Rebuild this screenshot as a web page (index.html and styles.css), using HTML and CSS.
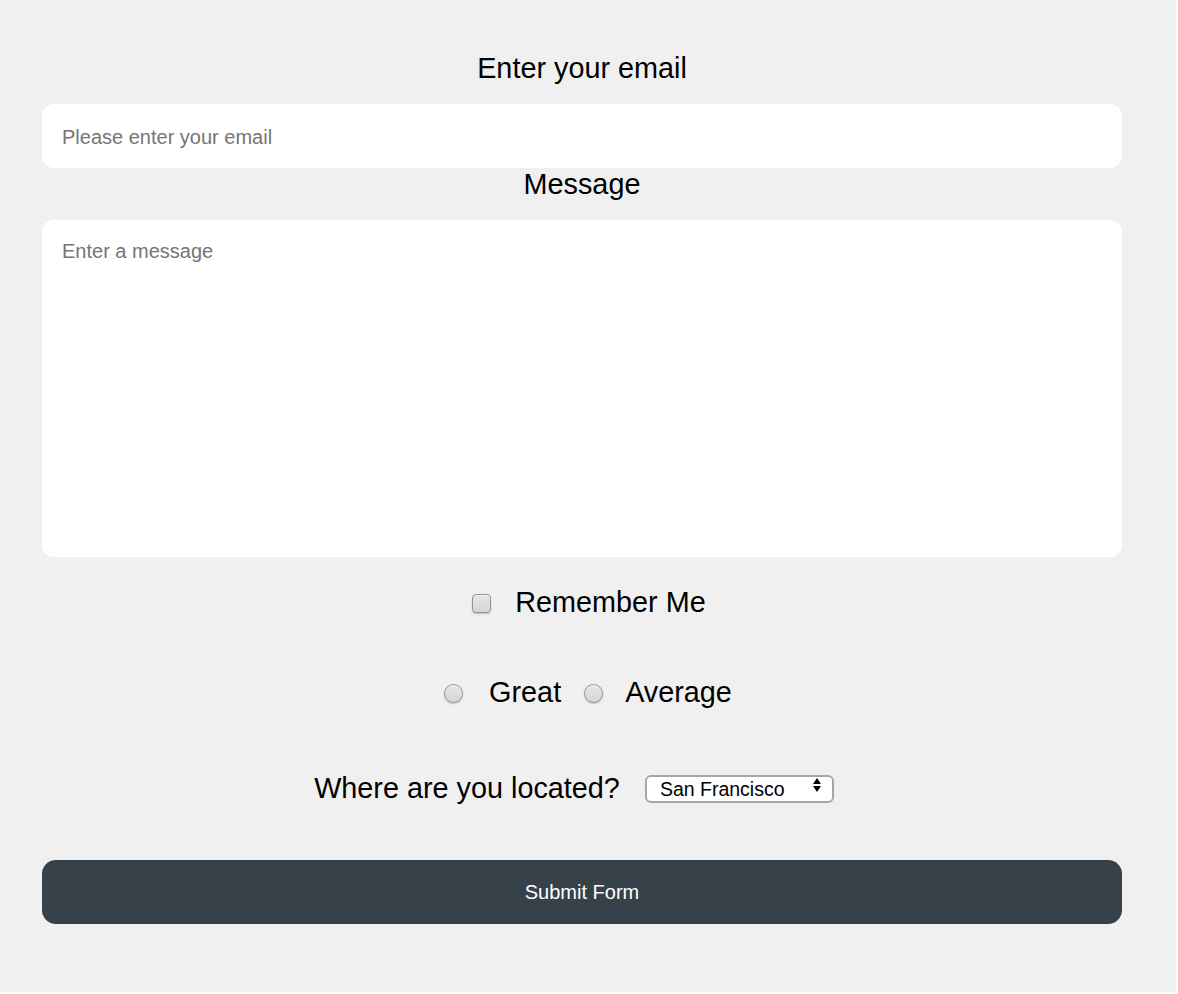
FILE: index.html
```html
<!DOCTYPE html>
<html lang="en">
<head>
<meta charset="utf-8">
<title>Contact Form</title>
<link rel="stylesheet" href="styles.css">
</head>
<body>
<div class="page">
  <form class="form">
    <label class="field-label" for="email">Enter your email</label>
    <input class="text-input" id="email" type="email" placeholder="Please enter your email">
    <label class="field-label" for="msg">Message</label>
    <textarea class="text-area" id="msg" placeholder="Enter a message"></textarea>

    <div class="row row-check">
      <input class="check" type="checkbox" id="remember">
      <label class="row-label" for="remember">Remember Me</label>
    </div>

    <div class="row row-radio">
      <input class="radio radio-first" type="radio" name="rating" id="great">
      <label class="row-label label-great" for="great">Great</label>
      <input class="radio radio-second" type="radio" name="rating" id="average">
      <label class="row-label" for="average">Average</label>
    </div>

    <div class="row row-select">
      <label class="row-label" for="loc">Where are you located?</label>
      <span class="select-wrap">
        <select class="select" id="loc">
          <option>San Francisco</option>
          <option>New York</option>
        </select>
        <svg class="select-arrows" width="8" height="14" viewBox="0 0 8 14"><path d="M4 0 L8 6 L0 6 Z" fill="#000"/><path d="M4 14 L8 8 L0 8 Z" fill="#000"/></svg>
      </span>
    </div>

    <button class="submit" type="button">Submit Form</button>
  </form>
</div>
</body>
</html>
```
FILE: styles.css
```css
html, body {
  margin: 0;
  padding: 0;
  background: #ffffff;
}

.page {
  width: 1176px;
  height: 992px;
  box-sizing: border-box;
  background: #f0f0f0;
  padding: 52px 54px 0 42px;
  font-family: "Liberation Sans", Arial, Helvetica, sans-serif;
  color: #000;
}

.form {
  display: flex;
  flex-direction: column;
  width: 1080px;
}

.field-label {
  display: block;
  text-align: center;
  font-size: 28.8px;
  line-height: 32px;
  margin-bottom: 20px;
}

.text-input,
.text-area {
  box-sizing: border-box;
  width: 1080px;
  border: none;
  border-radius: 12px;
  background: #ffffff;
  font-family: "Liberation Sans", Arial, Helvetica, sans-serif;
  font-size: 20px;
  color: #000;
  padding: 0 20px;
  outline: none;
  margin: 0;
}

.text-input {
  height: 64px;
  padding-top: 2px;
}

.text-area {
  height: 337px;
  padding-top: 19px;
  line-height: 24px;
  resize: none;
  display: block;
}

.text-input::placeholder,
.text-area::placeholder {
  color: #757575;
}

.row {
  display: flex;
  align-items: center;
  justify-content: center;
  height: 32px;
  box-sizing: border-box;
}

.row-label {
  font-size: 28.8px;
  line-height: 32px;
}

.check,
.radio {
  -webkit-appearance: none;
  appearance: none;
  margin: 0;
  width: 19px;
  height: 19px;
  box-sizing: border-box;
  border: 1px solid #929292;
  background: linear-gradient(#e6e6e6, #d6d6d6);
  box-shadow: inset 0 1px 1px rgba(255,255,255,0.7), 0 1px 1.5px rgba(0,0,0,0.22);
  flex: none;
}

.check {
  border-radius: 4px;
  transform: translateY(1px);
}

.radio {
  border-radius: 50%;
  transform: translateY(1px);
}

.row-check {
  margin-top: 29px;
  gap: 24px;
  padding-left: 14px;
}

.row-radio {
  margin-top: 58px;
  padding-left: 12px;
}

.row-radio .radio-first {
  margin-right: 26px;
}

.row-radio .label-great {
  margin-right: 23px;
}

.row-radio .radio-second {
  margin-right: 22px;
}

.row-select {
  margin-top: 64px;
  gap: 25px;
  padding-right: 16px;
}

.select-wrap {
  position: relative;
  display: inline-block;
  width: 189px;
  height: 28px;
  transform: translateY(1px);
}

.select {
  -webkit-appearance: none;
  appearance: none;
  box-sizing: border-box;
  width: 189px;
  height: 28px;
  margin: 0;
  border: 2px solid #a6a6a6;
  border-radius: 6px;
  background: #ffffff;
  font-family: "Liberation Sans", Arial, Helvetica, sans-serif;
  font-size: 19.5px;
  color: #000;
  padding: 0 0 0 13px;
  outline: none;
}

.select-arrows {
  position: absolute;
  right: 13px;
  top: 3px;
  pointer-events: none;
}

.submit {
  margin-top: 56px;
  height: 64px;
  width: 1080px;
  border: none;
  border-radius: 14px;
  background: #36414a;
  color: #ffffff;
  font-family: "Liberation Sans", Arial, Helvetica, sans-serif;
  font-size: 20px;
  padding-top: 2px;
  cursor: pointer;
}
```
